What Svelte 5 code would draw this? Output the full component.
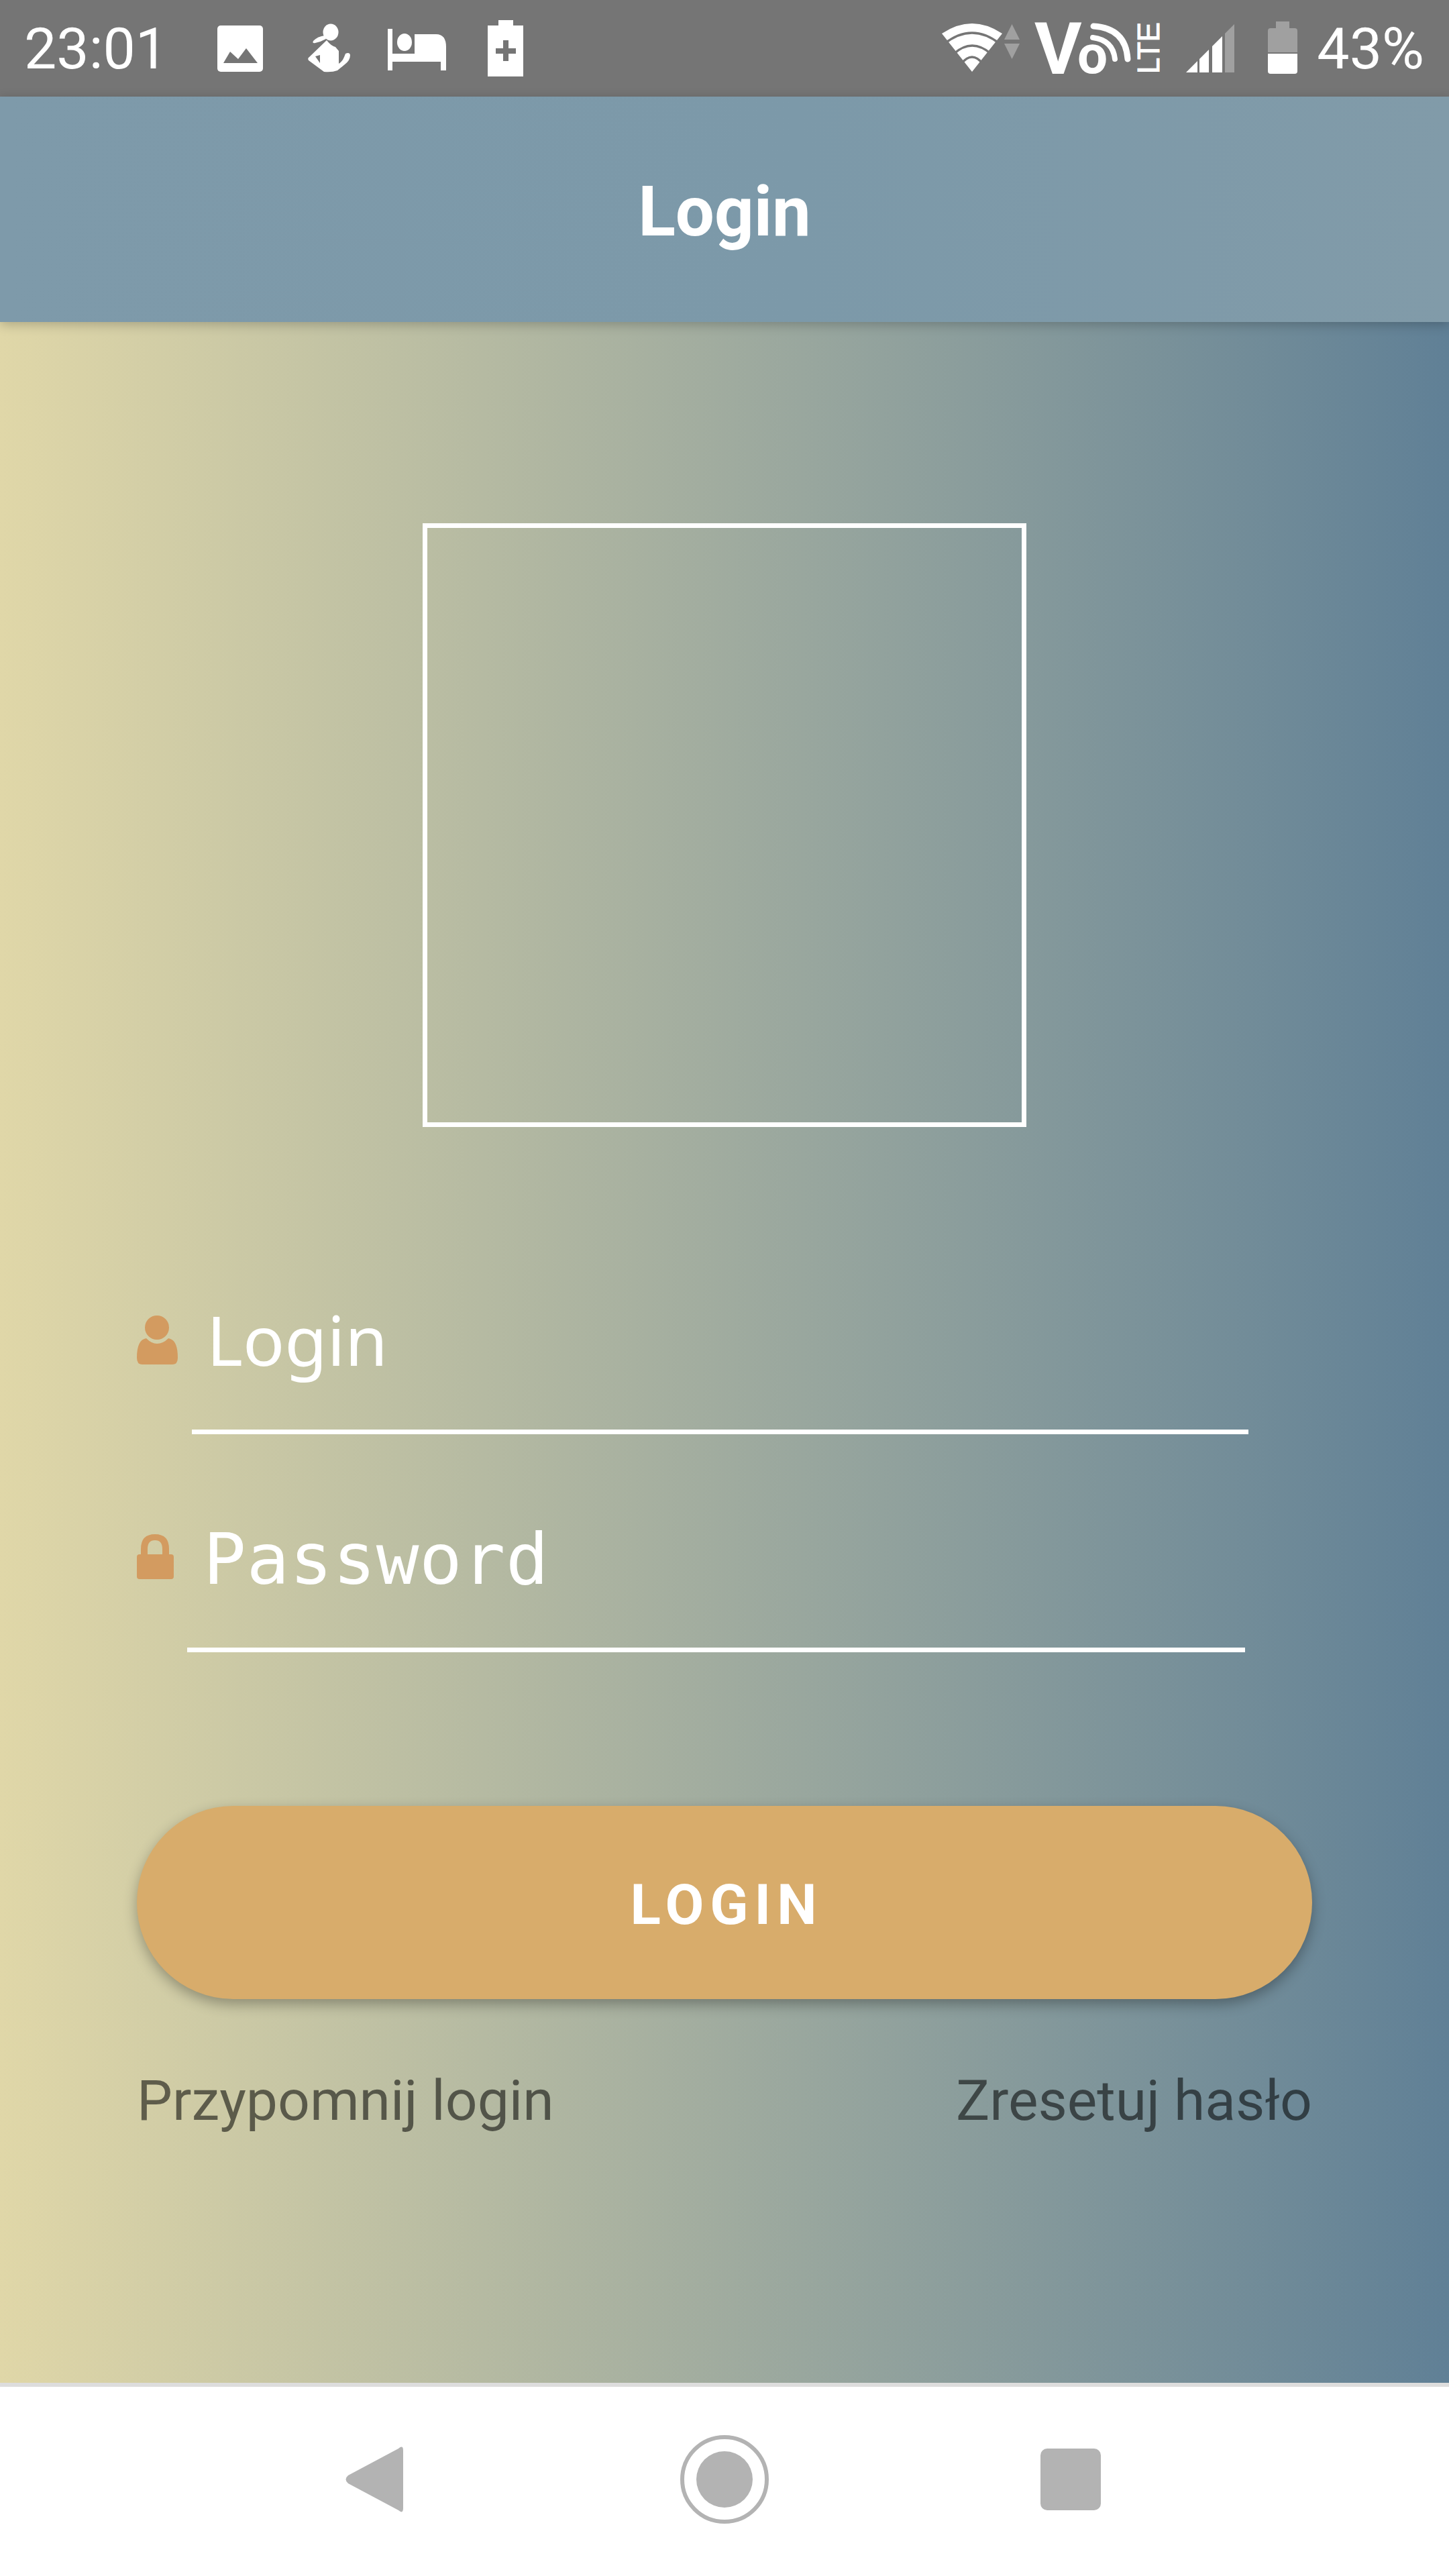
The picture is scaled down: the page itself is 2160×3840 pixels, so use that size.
<script>
  let login = "Login";
  let password = "Password";
</script>

<div class="screen">
  <div class="status">
    <span class="clock">23:01</span>
    <svg class="icons-left" viewBox="324 0 456 144" width="456" height="144">
      <!-- picture -->
      <rect x="324" y="38" width="68" height="69" rx="5" fill="#fff" />
      <polygon points="333,94 343,77 355,88 367,72 384,94" fill="#757575" />
      <!-- woman -->
      <ellipse cx="493" cy="48" rx="11.5" ry="12.5" fill="#fff" />
      <path d="M484 53 Q474 54 467 61 Q465 65 470 64 Q479 62 486 58 Z" fill="#fff" />
      <path d="M487 60 Q493 68 500 70 L505 76 L505 95 Q511 91 513 85 L515 80 Q521 77 522 82 Q522 90 514 96 L503 105 Q495 108 483 107 L460 90 Q458 87 461 85 Z M477 82 L470 84 L477 94 Z" fill="#fff" fill-rule="evenodd" />
      <!-- bed -->
      <rect x="578" y="43" width="7" height="62" fill="#fff" />
      <ellipse cx="603" cy="63" rx="11" ry="13" fill="#fff" />
      <path d="M585 80 H618 V51 H650 Q665 51 665 70 V105 H657 V92 H585 Z" fill="#fff" />
      <!-- battery charging -->
      <path d="M743 38 V30 H765 V38 H780 V114 H727 V38 Z" fill="#fff" />
      <path d="M739 72 H750 V60 H758 V72 H769 V80 H758 V91 H750 V80 H739 Z" fill="#757575" />
    </svg>
    <div class="spacer"></div>
    <svg class="icons-right" viewBox="1407 0 531 144" width="531" height="144">
      <!-- wifi -->
      <path d="M1453 107 L1408 50 Q1453 20 1498 50 Z" fill="#fff" />
      <g stroke="#757575" stroke-width="3.5" fill="none">
        <path d="M1412 65 Q1453 33 1494 65" />
        <path d="M1426 80 Q1453 56 1481 80" />
        <path d="M1437 95 Q1453 75 1469 95" />
      </g>
      <polygon points="1501,59 1524,59 1512.5,36" fill="#a0a0a0" />
      <polygon points="1501,65 1524,65 1512.5,88" fill="#a0a0a0" />
      <!-- volte -->
      <text x="1546" y="110" class="vo" font-size="108">V</text>
      <text x="1610" y="109" class="vo" font-size="80">o</text>
      <path d="M1634 39 Q1682 42 1685 88" stroke="#fff" stroke-width="9" stroke-linecap="round" fill="none" />
      <path d="M1633 56 Q1663 60 1666 88" stroke="#fff" stroke-width="8" stroke-linecap="round" fill="none" />
      <text transform="translate(1732 110) rotate(-90)" class="lte" font-size="46" textLength="77" lengthAdjust="spacingAndGlyphs">LTE</text>
      <!-- signal -->
      <polygon points="1772,108 1789,91 1789,108" fill="#fff" />
      <polygon points="1792,108 1792,88 1806,74 1806,108" fill="#fff" />
      <polygon points="1811,108 1811,69 1826,54 1826,108" fill="#fff" />
      <polygon points="1830,108 1830,50 1844,36 1844,108" fill="#a0a0a0" />
      <!-- battery -->
      <path d="M1906 42 V32 H1926 V42 H1934 Q1938 42 1938 46 V78 H1894 V46 Q1894 42 1898 42 Z" fill="#a0a0a0" />
      <path d="M1894 80 H1938 V106 Q1938 110 1934 110 H1898 Q1894 110 1894 106 Z" fill="#fff" />
    </svg>
    <span class="percent">43%</span>
  </div>

  <header class="appbar">Login</header>

  <main class="content">
    <div class="logo"></div>

    <div class="field first">
      <svg class="user" viewBox="0 0 61 73" width="61" height="73">
        <ellipse cx="30" cy="18" rx="18" ry="18" fill="#d39b60" />
        <path d="M14 34 Q22 42 30 42 Q39 42 47 34 Q61 36 61 63 Q61 73 53 73 H8 Q0 73 0 63 Q0 36 14 34 Z" fill="#d39b60" />
      </svg>
      <div class="input sans">{login}</div>
    </div>

    <div class="field second">
      <svg class="lock" viewBox="0 0 55 67" width="55" height="67">
        <path d="M6 30 V22 Q6 0 27 0 Q48 0 48 22 V30 H38 V22 Q38 9 27 9 Q16 9 16 22 V30 Z" fill="#d39b60" />
        <rect x="0" y="30" width="55" height="37" rx="4" fill="#d39b60" />
      </svg>
      <div class="input mono">{password}</div>
    </div>

    <button class="submit">LOGIN</button>

    <div class="links">
      <span>Przypomnij login</span>
      <span>Zresetuj hasło</span>
    </div>
  </main>

  <nav class="navbar">
    <svg viewBox="0 0 86 98" width="86" height="98">
      <path d="M79 3 Q86 -3 86 6 V92 Q86 101 79 95 L4 55 Q-3 49 4 43 Z" fill="#b3b3b3" />
    </svg>
    <svg class="home" viewBox="0 0 132 132" width="132" height="132">
      <circle cx="66" cy="66" r="63" stroke="#b3b3b3" stroke-width="6" fill="none" />
      <circle cx="66" cy="66" r="42" fill="#b3b3b3" />
    </svg>
    <div class="recent"></div>
  </nav>
</div>

<style>
  :global(body) {
    margin: 0;
  }
  .screen {
    width: 2160px;
    height: 3840px;
    display: flex;
    flex-direction: column;
    font-family: Roboto, "Liberation Sans", sans-serif;
    background: #fff;
  }
  .status {
    height: 144px;
    background: #757575;
    color: #fff;
    display: flex;
    align-items: center;
    padding: 0 37px 0 36px;
    font-size: 86px;
    flex: none;
  }
  .clock {
    width: 288px;
  }
  .spacer {
    flex: 1;
  }
  .percent {
    margin-left: 29px;
  }
  .vo {
    fill: #fff;
    font-family: Roboto, sans-serif;
    font-weight: 700;
  }
  .lte {
    fill: #fff;
    stroke: #fff;
    stroke-width: 1px;
    font-family: "Liberation Sans", sans-serif;
  }
  .appbar {
    height: 330px;
    padding-top: 6px;
    flex: none;
    background: linear-gradient(90deg, #7e9aaa, #7c99a9 55%, #819ba9);
    color: #fff;
    font-size: 103px;
    font-weight: 700;
    display: flex;
    align-items: center;
    justify-content: center;
    box-shadow: 0 4px 16px rgba(0, 0, 0, 0.22);
    position: relative;
  }
  .content {
    flex: 1;
    display: flex;
    flex-direction: column;
    padding: 300px 204px 0;
    background: linear-gradient(90deg, #e0d7a8, #608096);
  }
  .logo {
    width: 886px;
    height: 886px;
    border: 7px solid #fff;
    align-self: center;
    flex: none;
  }
  .field {
    display: flex;
    align-items: flex-start;
    height: 200px;
    flex: none;
  }
  .first {
    margin-top: 258px;
    margin-right: 95px;
  }
  .second {
    margin-top: 125px;
    margin-right: 100px;
  }
  .user {
    margin: 23px 21px 0 0;
    flex: none;
  }
  .lock {
    margin: 24px 20px 0 0;
    flex: none;
  }
  .input {
    flex: 1;
    height: 193px;
    border-bottom: 7px solid #fff;
    color: #fff;
    padding-left: 20px;
  }
  .sans {
    font-family: "Noto Sans", sans-serif;
    font-size: 103px;
    padding-left: 22px;
    line-height: 116px;
  }
  .mono {
    font-family: "DejaVu Sans Mono", monospace;
    font-size: 106px;
    letter-spacing: 0.6px;
    padding-left: 24px;
    line-height: 124px;
  }
  .submit {
    margin-top: 229px;
    height: 288px;
    flex: none;
    border: none;
    border-radius: 144px;
    background: #d8ac6b;
    color: #fff;
    font-family: Roboto, sans-serif;
    font-size: 84px;
    font-weight: 700;
    letter-spacing: 9px;
    box-shadow: 0 8px 20px rgba(0, 0, 0, 0.3);
    padding: 6px 0 0 6px;
  }
  .links {
    display: flex;
    justify-content: space-between;
    margin-top: 102px;
    font-size: 84px;
    color: rgba(0, 0, 0, 0.55);
  }
  .navbar {
    height: 276px;
    padding-bottom: 6px;
    flex: none;
    border-top: 6px solid #ddd;
    background: #fff;
    display: flex;
    align-items: center;
    padding-left: 515px;
  }
  .home {
    margin-left: 413px;
  }
  .recent {
    width: 90px;
    height: 92px;
    border-radius: 10px;
    background: #b3b3b3;
    margin-left: 405px;
  }
</style>
